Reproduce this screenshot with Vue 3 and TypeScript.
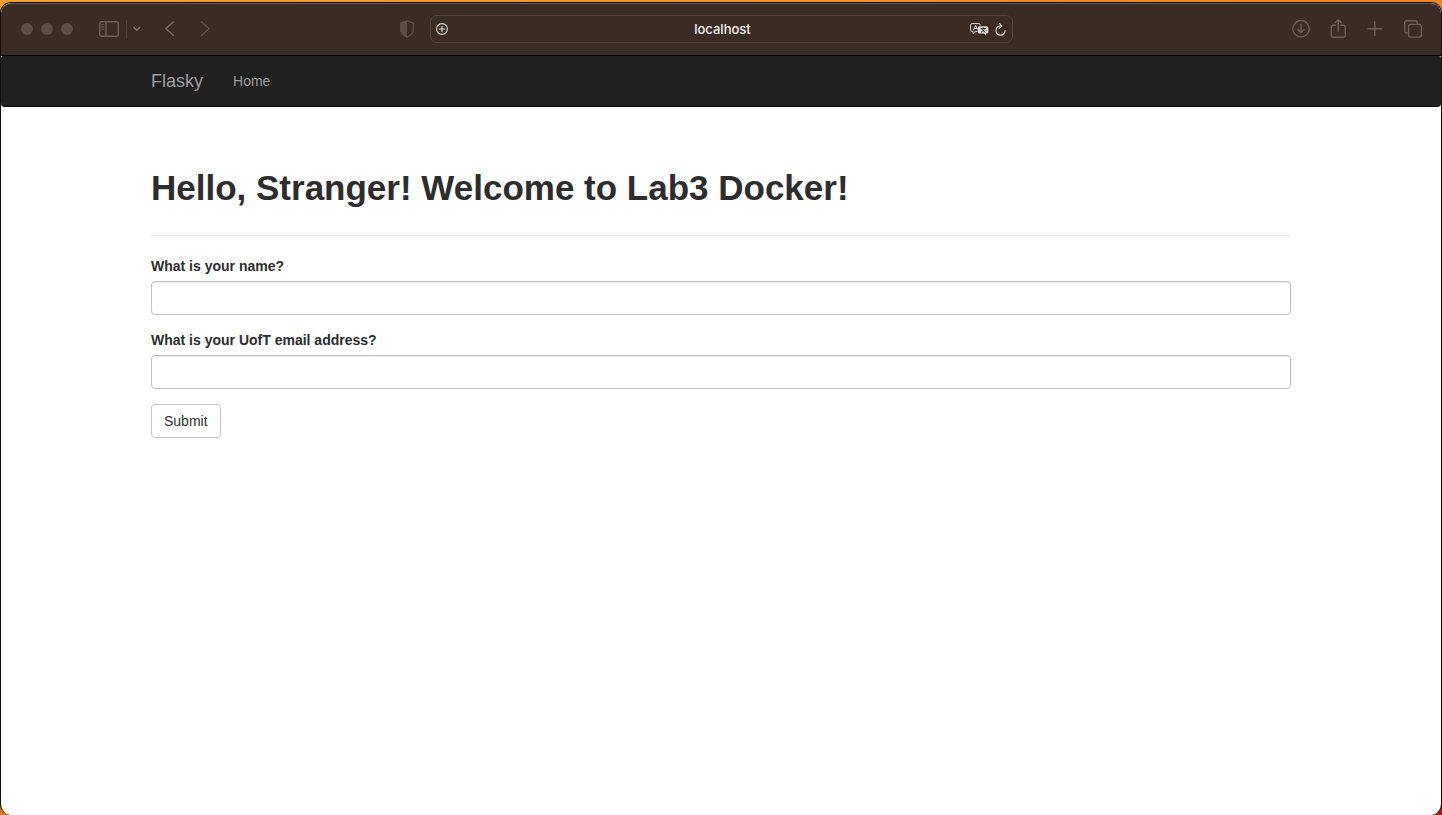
<script setup lang="ts">
import { ref } from 'vue'

interface Field {
  id: string
  label: string
  type: string
}

const fields: Field[] = [
  { id: 'name', label: 'What is your name?', type: 'text' },
  { id: 'email', label: 'What is your UofT email address?', type: 'text' },
]

const address = ref('localhost')
const values = ref<Record<string, string>>({ name: '', email: '' })
</script>

<template>
  <div class="desktop">
    <div class="window">
      <header class="toolbar">
        <div class="side left">
          <div class="lights"><i></i><i></i><i></i></div>
          <button class="tool sidebar" type="button" aria-label="Show sidebar">
            <svg width="20" height="16" viewBox="0 0 20 16">
              <rect x="0.75" y="0.75" width="18.5" height="14.5" rx="2" />
              <path d="M7 1v14" />
              <path d="M2.8 3.7h2M2.8 6h2M2.8 8.3h2" stroke-width="1" />
            </svg>
          </button>
          <span class="divider"></span>
          <button class="tool menu" type="button" aria-label="Tab groups">
            <svg width="8" height="6" viewBox="0 0 8 6"><path d="M1 1.5l2.800 2.700 2.800-2.700" /></svg>
          </button>
          <button class="tool back" type="button" aria-label="Back">
            <svg width="10" height="16" viewBox="0 0 10 16"><path d="M8.500 .8L1 7.600l7.500 6.900" /></svg>
          </button>
          <button class="tool forward" type="button" aria-label="Forward">
            <svg width="10" height="16" viewBox="0 0 10 16"><path d="M1.500 .8L9 7.600l-7.500 6.900" /></svg>
          </button>
          <button class="tool shield" type="button" aria-label="Privacy report">
            <svg width="14" height="18" viewBox="0 0 14 18">
              <path d="M7 .8l6.300 2.300v7.200c0 3.200-3 5.200-6.300 6.900C3.700 15.500.7 13.500.7 10.300V3.100z" />
              <path class="solid" d="M7 .8v16.400C3.700 15.500.7 13.500.7 10.300V3.100z" />
            </svg>
          </button>
        </div>

        <div class="address">
          <button class="tool bright" type="button" aria-label="Add">
            <svg width="12" height="12" viewBox="0 0 12 12">
              <circle cx="6" cy="6" r="5.400" />
              <path d="M6 3.300v5.400M3.300 6h5.400" />
            </svg>
          </button>
          <input v-model="address" type="text" aria-label="Address" />
          <div class="actions">
            <button class="tool bright" type="button" aria-label="Translate">
              <svg width="19" height="13" viewBox="0 0 19 13">
                <path d="M7 8.500H5.200L3 10.600V8.500H2.200A1.600 1.600 0 0 1 .6 6.900V2.200A1.600 1.600 0 0 1 2.200.6h6.600a1.600 1.600 0 0 1 1.600 1.200" stroke-width="1" />
                <path d="M3.600 7l2-4.700L7.300 6M4.300 5.500h2.600" stroke-width="1" />
                <path class="solid" d="M9.500 3.200h7.200a1.700 1.700 0 0 1 1.700 1.700v4a1.700 1.700 0 0 1-1.700 1.700H16v2l-2.400-2H9.500a1.700 1.700 0 0 1-1.700-1.700v-4a1.700 1.700 0 0 1 1.700-1.700z" />
                <path class="cut" d="M10.900 5.700h4.600M13.200 4.700v1M11.400 9c1.500-.6 2.600-1.700 3-3.200M12 5.900c.4 1.400 1.500 2.500 3 3.100" />
              </svg>
            </button>
            <button class="tool bright" type="button" aria-label="Reload">
              <svg width="11" height="13" viewBox="0 0 11 13">
                <path d="M6.200 2.900H5.500a4.600 4.600 0 1 0 4.600 4.600" />
                <path d="M4.600.7l2.300 2.200-2.300 2.200" />
              </svg>
            </button>
          </div>
        </div>

        <div class="side right">
          <button class="tool" type="button" aria-label="Downloads">
            <svg width="18" height="18" viewBox="0 0 18 18">
              <circle cx="9" cy="8.700" r="8.200" />
              <path d="M9 4.600v7.800M5.900 9.500L9 12.600l3.100-3.100" />
            </svg>
          </button>
          <button class="tool" type="button" aria-label="Share">
            <svg width="16" height="20" viewBox="0 0 16 20">
              <path d="M5.500 6.200H3A1.700 1.700 0 0 0 1.300 7.900v8.700A1.700 1.700 0 0 0 3 18.300h10.500a1.700 1.700 0 0 0 1.700-1.700V7.900a1.700 1.700 0 0 0-1.700-1.700H11" />
              <path d="M8.250 12V.8M5.250 3.600l3-2.900 3 2.900" />
            </svg>
          </button>
          <button class="tool" type="button" aria-label="New tab">
            <svg width="18" height="18" viewBox="0 0 18 18"><path d="M8.700 2v13.600M1.900 8.800h13.600" /></svg>
          </button>
          <button class="tool" type="button" aria-label="Tab overview">
            <svg width="18" height="18" viewBox="0 0 18 18">
              <rect x="4.600" y="4.400" width="12.700" height="12.700" rx="2" />
              <path d="M4.600 13H2.700a2 2 0 0 1-2-2V2.700a2 2 0 0 1 2-2h8.500a2 2 0 0 1 2 2v1.700" />
            </svg>
          </button>
        </div>
      </header>

      <nav class="navbar">
        <div class="container">
          <a class="brand" href="#">Flasky</a>
          <a class="link" href="#">Home</a>
        </div>
      </nav>

      <main class="container">
        <h1>Hello, Stranger! Welcome to Lab3 Docker!</h1>
        <form @submit.prevent>
          <div v-for="field in fields" :key="field.id" class="group">
            <label :for="field.id">{{ field.label }}</label>
            <input :id="field.id" v-model="values[field.id]" :type="field.type" />
          </div>
          <button class="submit" type="submit">Submit</button>
        </form>
      </main>
    </div>
  </div>
</template>

<style>
body {
  margin: 0;
}
</style>

<style scoped>
* {
  box-sizing: border-box;
}

.desktop {
  display: flex;
  min-height: 100vh;
  padding-top: 2px;
  background:
    radial-gradient(circle at 100% 100%, #b80f1c 0, #b80f1c 60px, transparent 300px),
    linear-gradient(165deg, #f2a033, #ea811b 40%, #c86a20);
  font-family: "Liberation Sans", Arial, sans-serif;
  font-size: 14px;
  line-height: 20px;
  color: #2d2d2d;
}

.window {
  flex: 1;
  min-width: 0;
  overflow: hidden;
  border: 1px solid #140d09;
  border-bottom: 0;
  border-radius: 11px;
  background: #fff;
}

.toolbar {
  display: grid;
  grid-template-columns: 1fr minmax(0, 583px) 1fr;
  align-items: center;
  padding: 11px 0 12px;
  border-top: 1px solid #6a5a50;
  border-bottom: 1px solid #000;
  border-radius: 10px 10px 0 0;
  background: #3a2b25;
}

.side {
  display: flex;
  align-items: center;
}

.left {
  padding: 0 16px 0 20px;
}

.right {
  justify-content: flex-end;
  gap: 20px;
  padding-right: 19px;
}

.lights {
  display: flex;
  gap: 8px;
}

.lights i {
  width: 12px;
  height: 12px;
  border-radius: 50%;
  background: #5b4c46;
}

.tool {
  display: block;
  padding: 0;
  border: 0;
  background: none;
  color: #6d5e57;
}

.tool svg {
  display: block;
  fill: none;
  stroke: currentColor;
  stroke-width: 1.4;
  stroke-linecap: round;
  stroke-linejoin: round;
}

.tool svg .solid {
  fill: currentColor;
  stroke: none;
}

.tool svg .cut {
  stroke: #3a2b25;
  stroke-width: 1;
}

.sidebar {
  margin-left: 26px;
}

.divider {
  width: 1px;
  height: 18px;
  margin: 0 6px 0 7px;
  background: #4e3f39;
}

.menu {
  color: #85766f;
}

.back {
  margin-left: 24px;
  color: #7a6b64;
}

.forward {
  margin-left: 25px;
  color: #5f504a;
}

.shield {
  margin-left: auto;
  color: #5b4c46;
}

.address {
  display: grid;
  grid-template-columns: 60px 1fr 56px;
  align-items: center;
  height: 28px;
  padding: 0 6px 0 5px;
  border: 1px solid #54453f;
  border-radius: 7px;
}

.address input {
  width: 100%;
  min-width: 0;
  padding: 0;
  border: 0;
  background: none;
  color: #f5f2f0;
  font: 500 13px/18px Inter, sans-serif;
  text-align: center;
}

.address svg {
  stroke-width: 1.1;
}

.bright {
  color: #ded9d5;
}

.actions {
  display: flex;
  align-items: center;
  justify-content: flex-end;
  gap: 6px;
}

.container {
  max-width: 1170px;
  margin: 0 auto;
  padding: 0 15px;
}

.navbar {
  height: 51px;
  border-bottom: 1px solid #080808;
  border-radius: 2px 2px 4px 4px;
  background: #202020;
}

.navbar .container {
  display: flex;
  align-items: center;
  gap: 30px;
  height: 50px;
}

.navbar a {
  color: #9d9d9d;
  text-decoration: none;
}

.navbar .brand {
  font-size: 18px;
}

h1 {
  margin: 61px 0 20px;
  padding-bottom: 27px;
  border-bottom: 1px solid #eaeaea;
  font-size: 35px;
  font-weight: 700;
  line-height: 40px;
}

.group {
  margin-bottom: 15px;
}

.group label {
  display: block;
  margin-bottom: 5px;
  font-weight: 700;
}

.group input {
  display: block;
  width: 100%;
  height: 34px;
  padding: 6px 12px;
  border: 1px solid #c2c2c2;
  border-radius: 4px;
  background: #fff;
  box-shadow: inset 0 1px 1px rgba(0, 0, 0, 0.075);
  color: #555;
  font: inherit;
}

.submit {
  padding: 6px 12px;
  border: 1px solid #c6c6c6;
  border-radius: 4px;
  background: #fff;
  color: #2d2d2d;
  font: inherit;
}
</style>
